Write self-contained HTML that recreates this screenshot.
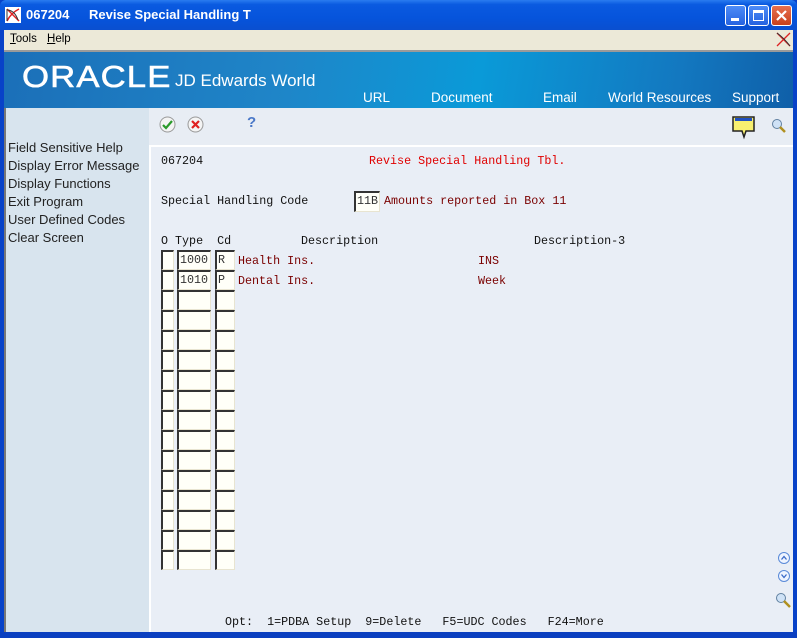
<!DOCTYPE html>
<html><head><meta charset="utf-8"><style>
*{margin:0;padding:0;box-sizing:border-box}
body{width:797px;height:638px;overflow:hidden;background:#0842c8;position:relative;font-family:"Liberation Sans",sans-serif}
.abs{position:absolute}
#title{left:0;top:0;width:797px;height:30px;background:linear-gradient(#2a7cf0 0%,#0a5ae0 15%,#0654dc 60%,#0a4fd0 100%);border-radius:6px 6px 0 0}
#title span{position:absolute;top:7px;color:#fff;font-weight:bold;font-size:13px}
.wb{position:absolute;top:5px;width:21px;height:21px;border:1px solid #fff;border-radius:3px;background:linear-gradient(#4d8cf7,#2663e0)}
#menu{left:4px;top:30px;width:789px;height:20px;background:#ece9d8;font-size:11.5px}
#menu span{position:absolute;top:3px}
#banner{left:4px;top:50px;width:789px;height:58px;background:linear-gradient(100deg,#1b6fb8 0%,#1f85c8 35%,#0a9ad8 60%,#1378c0 85%,#0f5fa8 100%);border-top:2px solid #9a9a9a}
#banner .n{position:absolute;top:38px;color:#fff;font-size:13.5px}
#left{left:4px;top:108px;width:145px;height:524px;background:#d8e4ee;border-left:2px solid #777}
#left div{position:absolute;left:2px;font-size:13px;color:#222}
#tool{left:149px;top:108px;width:644px;height:37px;background:#e8edf4}
#content{left:149px;top:145px;width:644px;height:487px;background:#e9eef6;border-top:2px solid #fff;border-left:2px solid #fff}
.m{position:absolute;font-family:"Liberation Mono",monospace;font-size:11.7px;white-space:pre;color:#111}
.r{color:#e00000}.d{color:#7a0000}
.c{position:absolute;height:20px;background:#fffff8;border-top:2px solid #333;border-left:2px solid #333;border-right:1px solid #e8e4d0;border-bottom:1px solid #e8e4d0;font-family:"Liberation Mono",monospace;font-size:11.7px;color:#333;padding-left:1px;line-height:16px}
#bottom{left:0;top:632px;width:797px;height:6px;background:#0a3fc0}
</style></head><body>
<div id="title" class="abs">
<svg class="abs" style="left:5px;top:7px" width="16" height="16"><rect width="16" height="16" fill="#fff"/><path d="M2 2 Q8 8 14 14 M14 2 Q6 6 2 14" stroke="#d22" stroke-width="1.5" fill="none"/><path d="M2 2 L2 14 M3 3 Q10 4 13 13" stroke="#333" fill="none"/></svg>
<span style="left:26px">067204</span><span style="left:89px">Revise Special Handling T</span>
<div class="wb" style="left:725px"><div style="position:absolute;left:5px;top:12px;width:8px;height:3px;background:#fff"></div></div>
<div class="wb" style="left:748px"><div style="position:absolute;left:4px;top:4px;width:11px;height:11px;border:1px solid #fff;border-top:3px solid #fff"></div></div>
<div class="wb" style="left:771px;background:linear-gradient(#e8704e,#c8401c)"><svg width="19" height="19" style="position:absolute;left:0;top:0"><path d="M5 5L14 14M14 5L5 14" stroke="#fff" stroke-width="2.2"/></svg></div>
</div>
<div id="menu" class="abs"><span style="left:6px"><u>T</u>ools</span><span style="left:43px"><u>H</u>elp</span>
<svg class="abs" style="left:772px;top:2px" width="15" height="15"><path d="M1 1 L14 14 M14 1 L1 14" stroke="#d22" stroke-width="1.3"/><path d="M1 1 Q8 6 14 14" stroke="#333" fill="none"/></svg></div>
<div id="banner" class="abs">
<div class="abs" style="left:18px;top:7px;color:#fff;font-size:31px;letter-spacing:1px;transform:scaleX(1.12);transform-origin:left;-webkit-text-stroke:0.6px #fff">ORACLE</div>
<div class="abs" style="left:171px;top:19px;color:#fff;font-size:17px">JD Edwards World</div>
<span class="n" style="left:359px">URL</span><span class="n" style="left:427px">Document</span><span class="n" style="left:539px">Email</span><span class="n" style="left:604px">World Resources</span><span class="n" style="left:728px">Support</span>
</div>
<div id="left" class="abs">
<div style="top:32px">Field Sensitive Help</div><div style="top:50px">Display Error Message</div><div style="top:68px">Display Functions</div><div style="top:86px">Exit Program</div><div style="top:104px">User Defined Codes</div><div style="top:122px">Clear Screen</div>
</div>
<div id="tool" class="abs">
<svg class="abs" style="left:10px;top:8px" width="17" height="17"><circle cx="8.5" cy="8.5" r="7.5" fill="#f4f4f4" stroke="#999"/><path d="M4 9 L7 12 L13 5" stroke="#2a9a2a" stroke-width="2.2" fill="none"/></svg>
<svg class="abs" style="left:38px;top:8px" width="17" height="17"><circle cx="8.5" cy="8.5" r="7.5" fill="#f4f4f4" stroke="#999"/><path d="M5 5L12 12M12 5L5 12" stroke="#e02020" stroke-width="2.2"/></svg>
<div class="abs" style="left:98px;top:6px;color:#4a78c8;font-weight:bold;font-size:15px">?</div>
<svg class="abs" style="left:582px;top:6px" width="26" height="26"><path d="M2 3 H23 V17 H15 L13 23 L11 17 H2 Z" fill="#f8f070" stroke="#222" stroke-width="1.5"/><rect x="4" y="4" width="17" height="3" fill="#2050c0"/></svg>
<svg class="abs" style="left:622px;top:10px" width="16" height="16"><circle cx="6" cy="6" r="4.5" fill="#cfe2f6" stroke="#6080a0"/><path d="M9 9L14 14" stroke="#b09020" stroke-width="2.5"/></svg>
</div>
<div id="content" class="abs">
<div class="m" style="left:10px;top:7px">067204</div>
<div class="m r" style="left:218px;top:7px">Revise Special Handling Tbl.</div>
<div class="m" style="left:10px;top:47px">Special Handling Code</div>
<div class="c" style="left:203px;top:44px;width:26px;height:21px">11B</div>
<div class="m d" style="left:233px;top:47px">Amounts reported in Box 11</div>
<div class="m" style="left:10px;top:87px">O Type  Cd</div>
<div class="m" style="left:150px;top:87px">Description</div>
<div class="m" style="left:383px;top:87px">Description-3</div>
<div class="m d" style="left:87px;top:107px">Health Ins.</div><div class="m d" style="left:327px;top:107px">INS</div>
<div class="m d" style="left:87px;top:127px">Dental Ins.</div><div class="m d" style="left:327px;top:127px">Week</div>
<div id="rows"></div>
<div class="m" style="left:74px;top:468px">Opt:  1=PDBA Setup  9=Delete   F5=UDC Codes   F24=More</div>
<svg class="abs" style="left:626px;top:404px" width="14" height="14"><circle cx="7" cy="7" r="5.5" fill="#eef4ff" stroke="#5a8ad8"/><path d="M4.5 8.5L7 5.5L9.5 8.5" stroke="#3a6ac8" fill="none" stroke-width="1.3"/></svg>
<svg class="abs" style="left:626px;top:422px" width="14" height="14"><circle cx="7" cy="7" r="5.5" fill="#eef4ff" stroke="#5a8ad8"/><path d="M4.5 5.5L7 8.5L9.5 5.5" stroke="#3a6ac8" fill="none" stroke-width="1.3"/></svg>
<svg class="abs" style="left:624px;top:445px" width="17" height="17"><circle cx="6" cy="6" r="4.5" fill="#cfe2f6" stroke="#6080a0"/><path d="M9 9L15 15" stroke="#b09020" stroke-width="2.5"/></svg>
</div>
<div id="bottom" class="abs"></div>
<script>
var h='',v=[['1000','R'],['1010','P']];
for(var i=0;i<16;i++){var t=103+i*20,a=v[i]||['',''];
h+='<div class="c" style="left:10px;top:'+t+'px;width:13px"></div><div class="c" style="left:26px;top:'+t+'px;width:34px">'+a[0]+'</div><div class="c" style="left:64px;top:'+t+'px;width:20px">'+a[1]+'</div>';}
document.getElementById('rows').outerHTML=h;
</script>
</body></html>
